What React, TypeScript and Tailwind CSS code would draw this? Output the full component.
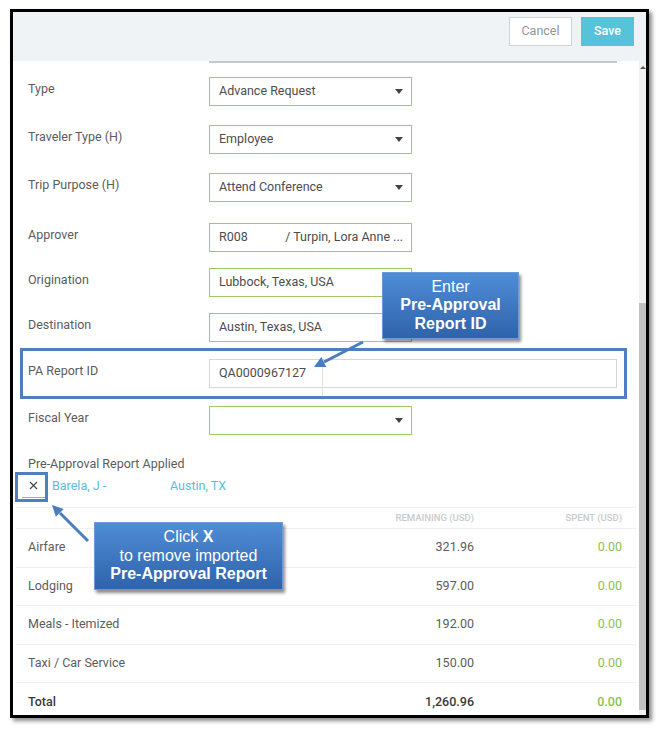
import React from "react";

const fields = [
	{ label: "Type", value: "Advance Request", select: true, mt: "mt-[14px]" },
	{ label: "Traveler Type (H)", value: "Employee", select: true, mt: "mt-[19px]" },
	{ label: "Trip Purpose (H)", value: "Attend Conference", select: true, mt: "mt-[19px]" },
];

const costs = [
	{ name: "Airfare", remaining: "321.96", spent: "0.00" },
	{ name: "Lodging", remaining: "597.00", spent: "0.00" },
	{ name: "Meals - Itemized", remaining: "192.00", spent: "0.00" },
	{ name: "Taxi / Car Service", remaining: "150.00", spent: "0.00" },
];

function Caret() {
	return (
		<span className="w-0 h-0 border-l-[4.5px] border-r-[4.5px] border-t-[5px] border-l-transparent border-r-transparent border-t-[#444]" />
	);
}

function Row({
	label,
	mt,
	children,
}: {
	label: string;
	mt: string;
	children: React.ReactNode;
}) {
	return (
		<div className={`flex items-center ${mt}`}>
			<div className="w-[181px] pb-[5px] text-[12.5px] text-[#5c5c5c]">{label}</div>
			{children}
		</div>
	);
}

function Input({
	children,
	select,
}: {
	children?: React.ReactNode;
	select?: boolean;
}) {
	return (
		<div className="w-[203px] h-[29px] border border-[#9ccc62] bg-white flex items-center justify-between pl-[9px] pr-[8px] text-[12.5px] text-[#4d4d4d]">
			<div className="flex items-center whitespace-nowrap overflow-hidden">{children}</div>
			{select && <Caret />}
		</div>
	);
}

export default function App() {
	return (
		<div className="relative w-[662px] h-[729px] bg-white overflow-hidden pt-[9px] pl-[10px] font-['Roboto',sans-serif]">
			<div className="w-[639px] h-[709px] border-[3px] border-black flex flex-col shadow-[3px_3px_4px_rgba(0,0,0,0.45)]">
				{/* header */}
				<div className="h-[49px] shrink-0 bg-[#f0f3f6] flex justify-end items-start gap-[9px] pt-[5px] pr-[12px]">
					<button
						type="button"
						className="w-[63px] h-[29px] border border-[#cfd3d6] bg-white text-[12.5px] text-[#939393]"
					>
						Cancel
					</button>
					<button
						type="button"
						className="w-[53px] h-[29px] bg-[#57c3d8] text-[12.5px] font-medium text-white"
					>
						Save
					</button>
				</div>

				<div className="flex flex-1 min-h-0">
					<div className="flex-1 min-w-0 overflow-hidden flex flex-col pl-[15px]">
						<div className="ml-[181px] w-[408px] h-[2px] shrink-0 bg-[#c5c9cc]" />

						{fields.map((f) => (
							<Row key={f.label} label={f.label} mt={f.mt}>
								<Input select>{f.value}</Input>
							</Row>
						))}

						<Row label="Approver" mt="mt-[21px]">
							<Input>
								<span className="w-[68px]">R008</span>
								<span>/ Turpin, Lora Anne ...</span>
							</Input>
						</Row>
						<Row label="Origination" mt="mt-[16px]">
							<Input>Lubbock, Texas, USA</Input>
						</Row>
						<Row label="Destination" mt="mt-[16px]">
							<Input>Austin, Texas, USA</Input>
						</Row>
						<Row label="PA Report ID" mt="mt-[17px]">
							<div className="w-[408px] h-[29px] border border-[#d3d7d9] flex items-center pl-[9px] text-[12.5px] text-[#4d4d4d]">
								QA0000967127
							</div>
						</Row>
						<Row label="Fiscal Year" mt="mt-[18px]">
							<Input select />
						</Row>

						<div className="mt-[21px] leading-[16px] text-[12.5px] text-[#5c5c5c]">
							Pre-Approval Report Applied
						</div>
						<div className="mt-[2px] h-[24px] flex items-center -ml-[6px] text-[12.5px]">
							<span className="w-[23px] h-[24px] flex items-center justify-center border-b-[1.5px] border-[#6fcf7a]">
								<svg width="9" height="9" viewBox="0 0 9 9">
									<path d="M1 1 L8 8 M8 1 L1 8" stroke="#444" strokeWidth="1.1" />
								</svg>
							</span>
							<span className="ml-[7px] w-[118px] text-[#56c0da]">Barela, J -</span>
							<span className="text-[#56c0da]">Austin, TX</span>
						</div>

						{/* cost table */}
						<div className="mt-[9px] -ml-[12px] mr-[3px] flex flex-col text-[12.5px]">
							<div className="h-[22px] border-y border-[#eef1f3] flex items-center pl-[12px] pr-[14px] text-[9.5px] font-medium uppercase text-[#c8cbce]">
								<span className="flex-1" />
								<span className="w-[100px] text-right">Remaining (USD)</span>
								<span className="w-[148px] text-right">Spent (USD)</span>
							</div>
							{costs.map((c) => (
								<div
									key={c.name}
									className="h-[38.5px] shrink-0 border-b border-[#eef1f3] flex items-center pl-[12px] pr-[14px] text-[#5c5c5c]"
								>
									<span className="flex-1">{c.name}</span>
									<span className="w-[100px] text-right">{c.remaining}</span>
									<span className="w-[148px] text-right text-[#8cc152]">{c.spent}</span>
								</div>
							))}
							<div className="h-[38.5px] shrink-0 flex items-center pl-[12px] pr-[14px] font-medium text-[#3a3a3a]">
								<span className="flex-1">Total</span>
								<span className="w-[100px] text-right">1,260.96</span>
								<span className="w-[148px] text-right text-[#8cc152]">0.00</span>
							</div>
						</div>
					</div>

					{/* scrollbar */}
					<div className="w-[7px] shrink-0 bg-[#f1f1f1] flex flex-col">
						<div className="h-[242px] flex justify-center pt-[5px]">
							<span className="w-0 h-0 border-l-[3px] border-r-[3px] border-b-[3px] border-l-transparent border-r-transparent border-b-[#555]" />
						</div>
						<div className="h-[407px] bg-[#c1c1c1]" />
					</div>
				</div>
			</div>

			{/* annotations */}
			<div className="absolute left-[322px] top-[359px] w-px h-[41px] bg-[#dde5dc]" />
			<div className="absolute left-[20px] top-[348px] w-[607px] h-[51px] border-[3px] border-[#4f7fbf]" />
			<div className="absolute left-[15px] top-[472px] w-[33px] h-[30px] border-[3px] border-[#4f7fbf]" />

			<svg
				className="absolute left-0 top-0 pointer-events-none"
				width="662"
				height="729"
				viewBox="0 0 662 729"
			>
				<line x1="363" y1="342" x2="324" y2="362" stroke="#4a7dc0" strokeWidth="3" />
				<polygon points="314,367 326.3,366.9 321.3,357.1" fill="#4a7dc0" />
				<line x1="88" y1="541" x2="60" y2="513" stroke="#4a7dc0" strokeWidth="3" />
				<polygon points="52,505 63.7,508.9 55.9,516.7" fill="#4a7dc0" />
			</svg>

			<div className="absolute left-[382px] top-[272px] w-[137px] h-[67px] border border-[#6b9ad6] bg-gradient-to-b from-[#4f8dd7] to-[#2f63aa] shadow-[2px_3px_3px_rgba(0,0,0,0.45)] flex flex-col items-center justify-center text-white text-[16px] leading-[18.5px] font-['Liberation_Sans',Arial,sans-serif]">
				<span>Enter</span>
				<span className="font-bold">Pre-Approval</span>
				<span className="font-bold">Report ID</span>
			</div>

			<div className="absolute left-[94px] top-[522px] w-[189px] h-[68px] border border-[#6b9ad6] bg-gradient-to-b from-[#4f8dd7] to-[#2f63aa] shadow-[2px_3px_3px_rgba(0,0,0,0.45)] flex flex-col items-center justify-center text-white text-[16px] leading-[18.5px] font-['Liberation_Sans',Arial,sans-serif]">
				<span>
					Click <span className="font-bold">X</span>
				</span>
				<span>to remove imported</span>
				<span className="font-bold">Pre-Approval Report</span>
			</div>
		</div>
	);
}
